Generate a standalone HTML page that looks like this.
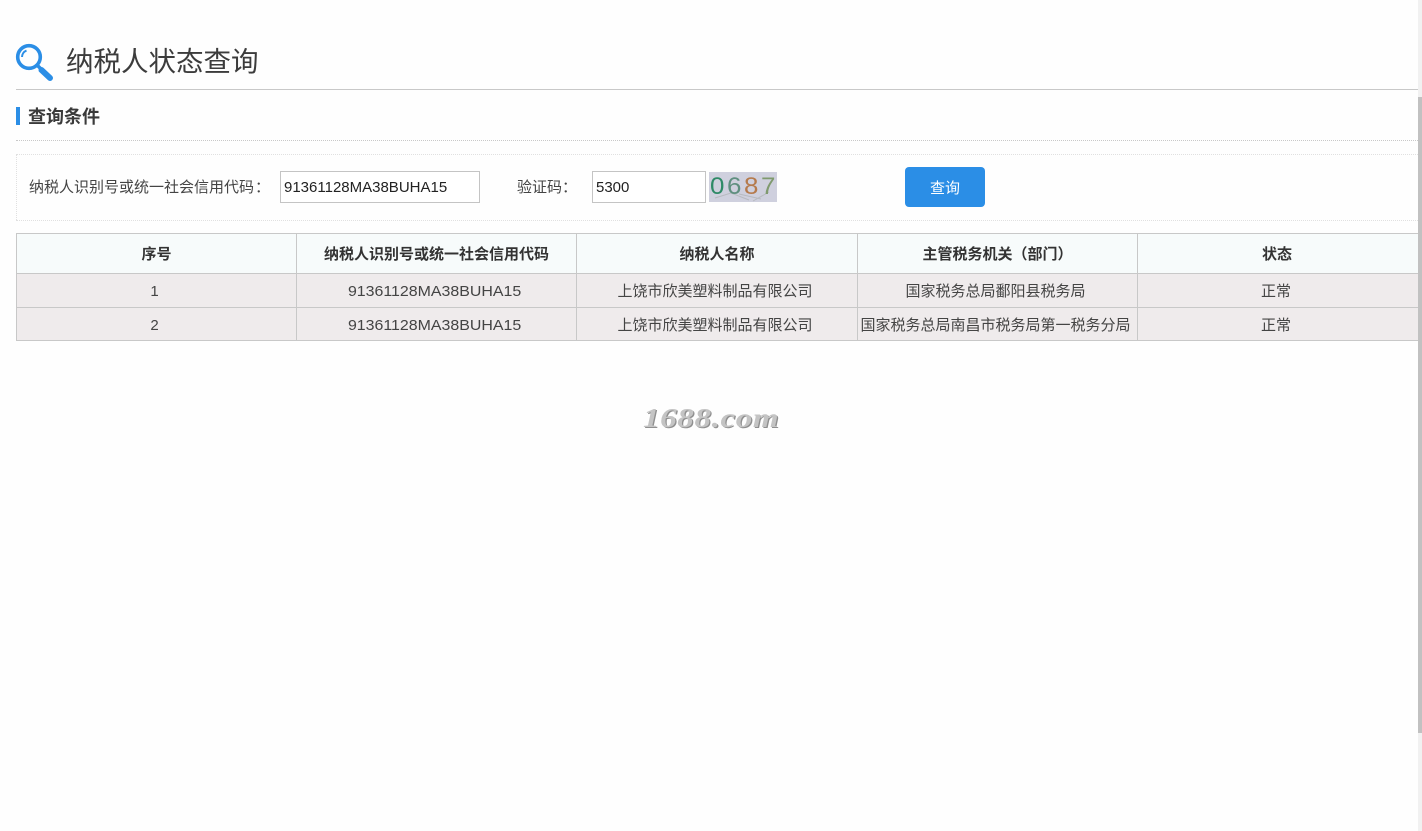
<!DOCTYPE html>
<html lang="zh-CN">
<head>
<meta charset="utf-8">
<title>纳税人状态查询</title>
<style>
html,body{margin:0;padding:0;background:#fefefe;width:1422px;height:831px;overflow:hidden}
body{position:relative;font-family:"Liberation Sans","Noto Sans CJK SC",sans-serif;color:#444}
.a{position:absolute;white-space:nowrap}
.cell{position:absolute;text-align:center;white-space:nowrap;font-size:15px;color:#444}
.n span{display:inline-block;transform:scaleX(1.062)}
.h{background:#f7fbfb}
.r{background:#efebec}
.ln{position:absolute;background:#c8c8c8}
.dot{position:absolute;left:16px;width:1402px;height:0;border-top:1px dotted #d0d0d0}
.inp{position:absolute;box-sizing:border-box;height:32px;border:1px solid #c4c4c4;background:#fff;color:#222;font-size:15px;line-height:31px;padding-left:3px}
</style>
</head>
<body>
<svg class="a" style="left:14px;top:42px" width="40" height="40" viewBox="0 0 40 40">
  <circle cx="15" cy="15" r="11.3" fill="none" stroke="#2b8ee6" stroke-width="3.6"/>
  <path d="M8 15a7 7 0 0 1 4.5-6.4" fill="none" stroke="#2b8ee6" stroke-width="2"/>
  <path d="M23.5 23.5 L28 28" stroke="#2b8ee6" stroke-width="3.5"/>
  <path d="M27.5 28 L36 36" stroke="#2b8ee6" stroke-width="6" stroke-linecap="round"/>
</svg>
<div class="a" style="left:66px;top:43px;font-size:27.5px;line-height:38px;color:#3c3c3c">纳税人状态查询</div>
<div class="ln" style="left:16px;top:89px;width:1402px;height:1px;background:#c8c8c8"></div>

<div class="a" style="left:16px;top:107px;width:4px;height:18px;background:#2b8ee6"></div>
<div class="a" style="left:28px;top:105px;font-size:18px;line-height:24px;font-weight:bold;color:#3a3a3a">查询条件</div>
<div class="dot" style="top:140px;border-top-color:#c8c8c8"></div>
<div class="dot" style="top:154px;border-top-color:#e0e0e0"></div>
<div class="dot" style="top:220px;border-top-color:#e0e0e0"></div>
<div class="a" style="left:16px;top:154px;height:66px;border-left:1px dotted #e0e0e0"></div>

<div class="a" style="left:29px;top:178px;font-size:15px;line-height:20px;color:#444">纳税人识别号或统一社会信用代码<span style="margin-left:1px">：</span></div>
<div class="inp" style="left:280px;top:171px;width:200px">91361128MA38BUHA15</div>
<div class="a" style="left:517px;top:178px;font-size:15px;line-height:20px;color:#444">验证码：</div>
<div class="inp" style="left:592px;top:171px;width:114px">5300</div>
<div class="a" style="left:709px;top:172px;width:68px;height:30px;background:#cfd0de"></div>
<svg class="a" style="left:709px;top:172px" width="68" height="30" viewBox="0 0 68 30">
  <path d="M6 26 L22 21 L40 28 M30 22 L52 27 M44 29 L60 20" stroke="#b7bac0" stroke-width="1" fill="none"/>
  <text transform="translate(1,22) scale(1.08,1)" font-family="Liberation Sans" font-size="24" fill="#2f8a67">0</text>
  <text transform="translate(18,22) scale(1.08,1)" font-family="Liberation Sans" font-size="24" fill="#5f8f7f">6</text>
  <text transform="translate(35,22) scale(1.08,1)" font-family="Liberation Sans" font-size="24" fill="#b57a4c">8</text>
  <text transform="translate(52,22) scale(1.08,1)" font-family="Liberation Sans" font-size="24" fill="#7f9a6e">7</text>
</svg>
<div class="a" style="left:905px;top:167px;width:80px;height:40px;background:#2b8ee6;border-radius:4px;color:#fff;font-size:15px;line-height:43px;text-align:center">查询</div>

<!-- table backgrounds -->
<div class="a h" style="left:16px;top:233px;width:1402px;height:41px"></div>
<div class="a r" style="left:16px;top:274px;width:1402px;height:67px"></div>

<!-- header -->
<div class="cell" style="left:17px;top:245px;width:279px;line-height:20px;font-weight:bold;color:#333">序号</div>
<div class="cell" style="left:297px;top:245px;width:279px;line-height:20px;font-weight:bold;color:#333">纳税人识别号或统一社会信用代码</div>
<div class="cell" style="left:577px;top:245px;width:280px;line-height:20px;font-weight:bold;color:#333">纳税人名称</div>
<div class="cell" style="left:858px;top:245px;width:279px;line-height:20px;font-weight:bold;color:#333">主管税务机关（部门）</div>
<div class="cell" style="left:1137px;top:245px;width:280px;line-height:20px;font-weight:bold;color:#333">状态</div>

<!-- row 1 -->
<div class="cell" style="left:15px;top:282px;width:279px;line-height:20px">1</div>
<div class="cell n" style="left:295px;top:282px;width:279px;line-height:20px"><span>91361128MA38BUHA15</span></div>
<div class="cell" style="left:575px;top:282px;width:280px;line-height:20px">上饶市欣美塑料制品有限公司</div>
<div class="cell" style="left:856px;top:282px;width:279px;line-height:20px">国家税务总局鄱阳县税务局</div>
<div class="cell" style="left:1136px;top:282px;width:280px;line-height:20px">正常</div>

<!-- row 2 -->
<div class="cell" style="left:15px;top:316px;width:279px;line-height:20px">2</div>
<div class="cell n" style="left:295px;top:316px;width:279px;line-height:20px"><span>91361128MA38BUHA15</span></div>
<div class="cell" style="left:575px;top:316px;width:280px;line-height:20px">上饶市欣美塑料制品有限公司</div>
<div class="cell" style="left:856px;top:316px;width:279px;line-height:20px">国家税务总局南昌市税务局第一税务分局</div>
<div class="cell" style="left:1136px;top:316px;width:280px;line-height:20px">正常</div>

<!-- grid lines -->
<div class="ln" style="left:16px;top:233px;width:1402px;height:1px"></div>
<div class="ln" style="left:16px;top:273px;width:1402px;height:1px"></div>
<div class="ln" style="left:16px;top:307px;width:1402px;height:1px"></div>
<div class="ln" style="left:16px;top:340px;width:1402px;height:1px"></div>
<div class="ln" style="left:16px;top:233px;width:1px;height:108px"></div>
<div class="ln" style="left:296px;top:233px;width:1px;height:108px"></div>
<div class="ln" style="left:576px;top:233px;width:1px;height:108px"></div>
<div class="ln" style="left:857px;top:233px;width:1px;height:108px"></div>
<div class="ln" style="left:1137px;top:233px;width:1px;height:108px"></div>

<!-- watermark -->
<div class="a" style="left:643px;top:403px;font-family:'Liberation Serif',serif;font-style:italic;font-weight:bold;font-size:27px;line-height:30px;letter-spacing:.5px;color:#c4c4c4;text-shadow:1px 1px 0 #8f8f8f;transform-origin:0 50%;transform:scaleX(1.225)">1688.com</div>

<!-- scrollbar -->
<div class="a" style="left:1418px;top:0;width:4px;height:831px;background:#f1f1f1"></div>
<div class="a" style="left:1418px;top:97px;width:4px;height:636px;background:#c1c1c1"></div>
</body>
</html>
